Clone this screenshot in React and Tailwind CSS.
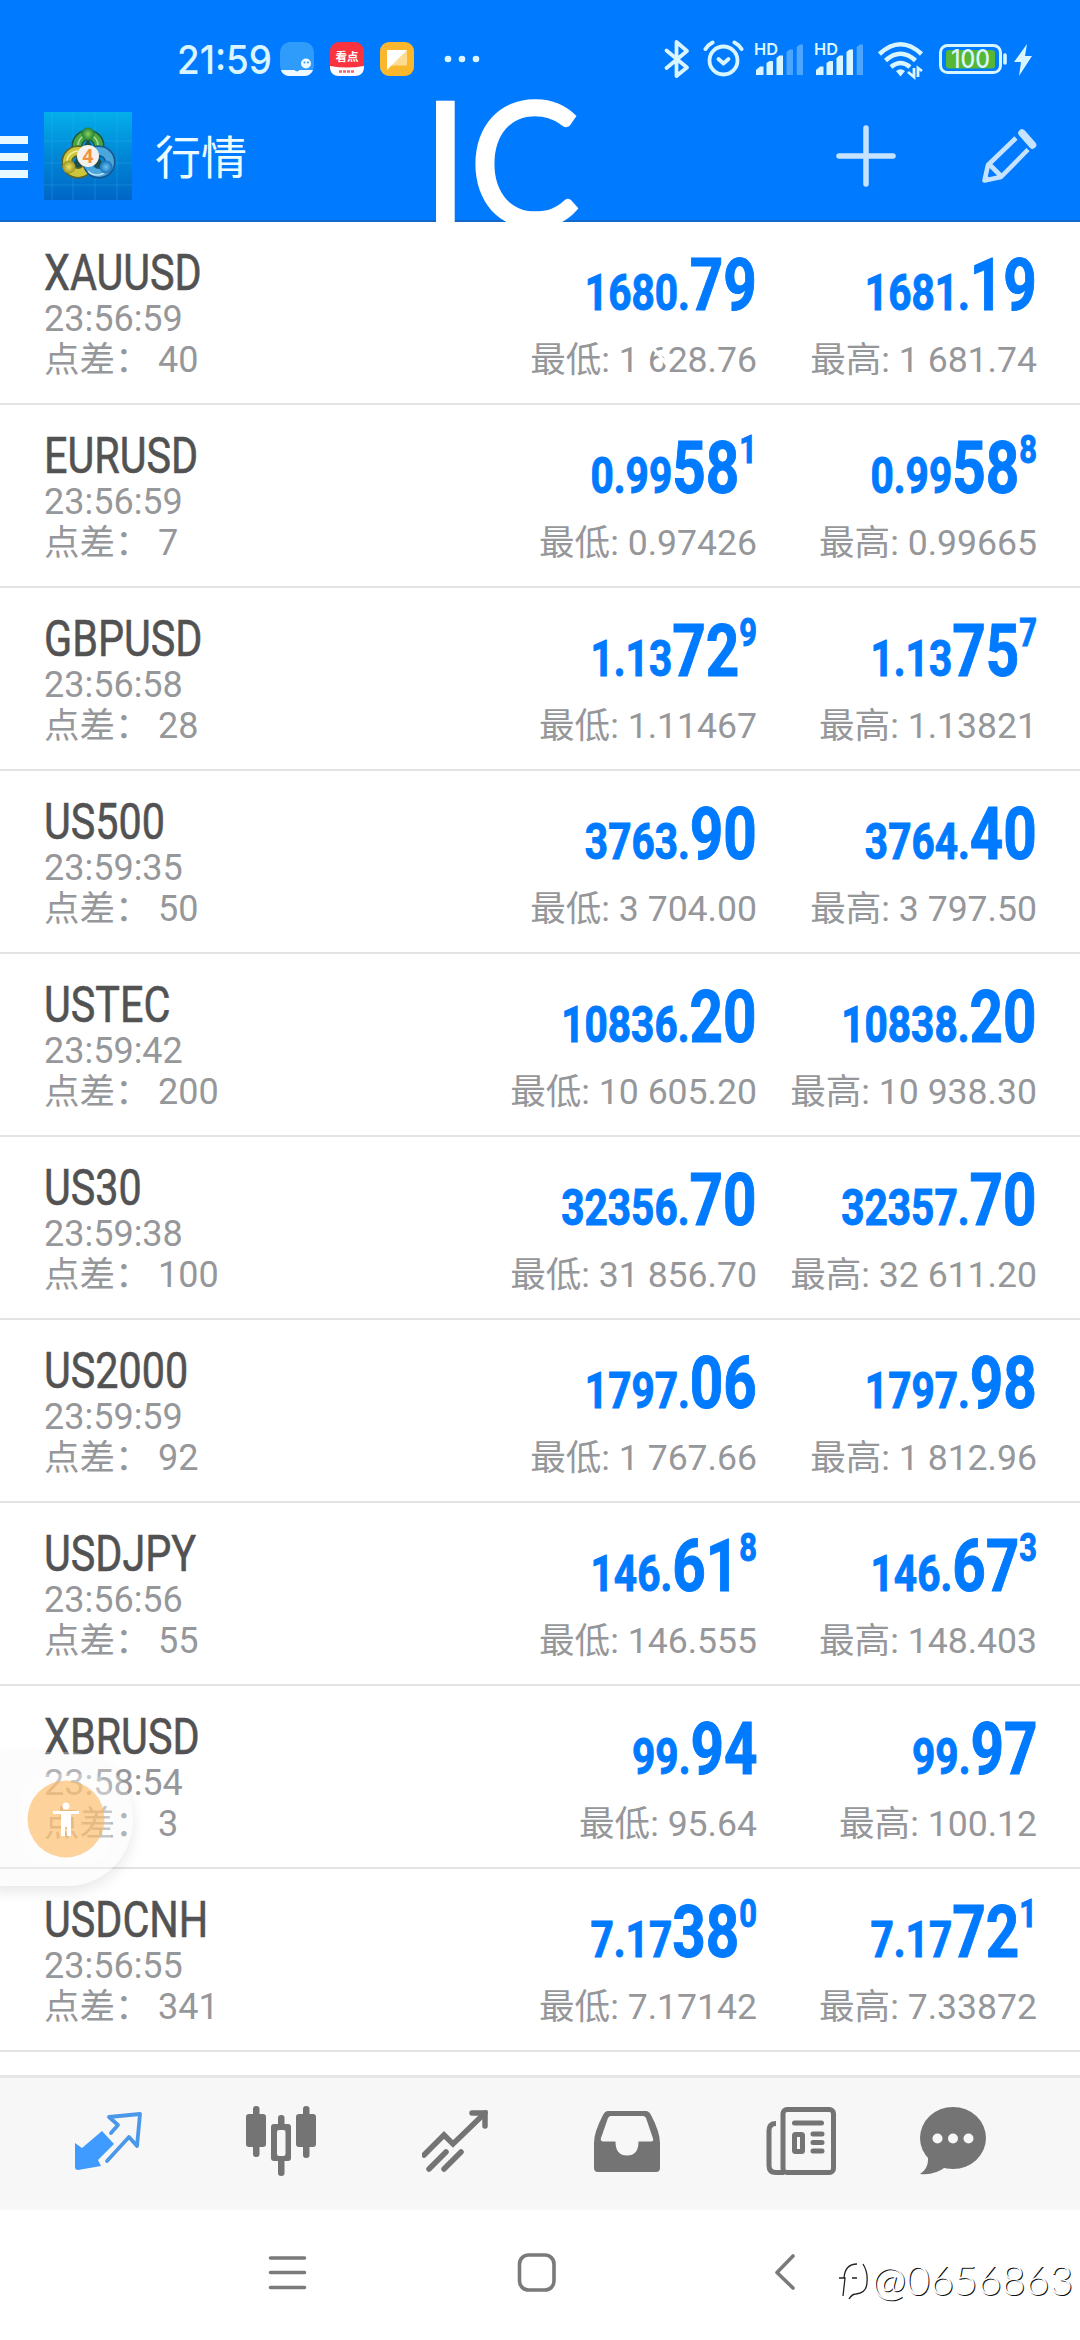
import clsx from 'clsx';

const quotes = [
  { symbol: 'XAUUSD', time: '23:56:59', spread: '40', bid: ['1680.', '79', ''], ask: ['1681.', '19', ''], low: '1 628.76', high: '1 681.74' },
  { symbol: 'EURUSD', time: '23:56:59', spread: '7', bid: ['0.99', '58', '1'], ask: ['0.99', '58', '8'], low: '0.97426', high: '0.99665' },
  { symbol: 'GBPUSD', time: '23:56:58', spread: '28', bid: ['1.13', '72', '9'], ask: ['1.13', '75', '7'], low: '1.11467', high: '1.13821' },
  { symbol: 'US500', time: '23:59:35', spread: '50', bid: ['3763.', '90', ''], ask: ['3764.', '40', ''], low: '3 704.00', high: '3 797.50' },
  { symbol: 'USTEC', time: '23:59:42', spread: '200', bid: ['10836.', '20', ''], ask: ['10838.', '20', ''], low: '10 605.20', high: '10 938.30' },
  { symbol: 'US30', time: '23:59:38', spread: '100', bid: ['32356.', '70', ''], ask: ['32357.', '70', ''], low: '31 856.70', high: '32 611.20' },
  { symbol: 'US2000', time: '23:59:59', spread: '92', bid: ['1797.', '06', ''], ask: ['1797.', '98', ''], low: '1 767.66', high: '1 812.96' },
  { symbol: 'USDJPY', time: '23:56:56', spread: '55', bid: ['146.', '61', '8'], ask: ['146.', '67', '3'], low: '146.555', high: '148.403' },
  { symbol: 'XBRUSD', time: '23:58:54', spread: '3', bid: ['99.', '94', ''], ask: ['99.', '97', ''], low: '95.64', high: '100.12' },
  { symbol: 'USDCNH', time: '23:56:55', spread: '341', bid: ['7.17', '38', '0'], ask: ['7.17', '72', '1'], low: '7.17142', high: '7.33872' },
];

function Signal({ bars }) {
  return (
    <svg viewBox="0 0 51 34" className="h-[34px] w-[51px] overflow-visible" fill="#d9f5ff">
      <text x="0" y="12.500" fontSize="16.500" fontFamily="Inter" fontWeight="600" textLength="24" lengthAdjust="spacingAndGlyphs">HD</text>
      <path d="M2 33v-5l4-3.500h3.500V33z" />
      <path d="M12.500 33V21l3-2H19v14z" />
      <path d="M22.500 33V16l3-2.500H29V33z" />
      <path d="M32.500 33V10l3-2.500H39V33z" opacity={bars > 3 ? 1 : 0.35} />
      <path d="M42.700 33V5l3-2.500H49V33z" opacity="0.35" />
    </svg>
  );
}

function StatusBar() {
  return (
    <div className="flex h-[112px] items-start pt-[40px] pl-[177px] text-[#d9f5ff]">
      <span className="w-[103px] origin-left scale-x-[0.92] font-['Inter'] text-[40px] leading-[40px] font-medium whitespace-nowrap">21:59</span>
      <svg viewBox="0 0 200 42" className="h-[42px] w-[200px]">
        <rect x="0" y="2" width="34" height="34" rx="10" fill="#2f9bfb" />
        <path d="M1 30h13l3 1.500 3-1.500h13c-2 5-6 6-9 6H10c-4 0-8-2-9-6z" fill="#eefaff" />
        <circle cx="26" cy="23.500" r="5" fill="#eefaff" />
        <circle cx="24.500" cy="22.500" r="1" fill="#2f9bfb" />
        <circle cx="28" cy="22.500" r="1" fill="#2f9bfb" />
        <rect x="50" y="2" width="34" height="34" rx="9" fill="#f9343e" />
        <path d="M50 26q17 3 34 0v1c0 6-4 9-9 9H59c-5 0-9-3-9-9z" fill="#fff" />
        <text x="67" y="21" fontSize="11.500" fontWeight="700" textAnchor="middle" fontFamily="Noto Sans CJK SC" fill="#fff">看点</text>
        <path d="M59 31.500h16" stroke="#f9606a" strokeWidth="2.500" strokeDasharray="3 1" />
        <rect x="100" y="2" width="34" height="34" rx="9" fill="#fbb72c" />
        <rect x="107" y="10" width="20" height="15.500" rx="1" fill="#fddb91" />
        <path d="M107 10h20l-20 20z" fill="#fff" />
        <g fill="#d9f5ff">
          <circle cx="168" cy="19" r="3.300" />
          <circle cx="182" cy="19" r="3.300" />
          <circle cx="196" cy="19" r="3.300" />
        </g>
      </svg>
      <svg viewBox="0 0 82 42" className="ml-[183px] h-[42px] w-[82px]" fill="none" stroke="#d9f5ff" strokeWidth="3.800" strokeLinecap="round" strokeLinejoin="round">
        <path d="M3.500 10.500 24 27.500 13.500 36V2L24 11 3.500 28" />
        <circle cx="60.500" cy="20.500" r="14" />
        <path d="m55.500 19 5 4.500 5-4.500" />
        <path d="M42.500 9q3-4.500 7-6.500M78.500 9q-3-4.500-7-6.500" strokeWidth="4" />
      </svg>
      <div className="ml-[9px] flex gap-[9px] pt-[2px]">
        <Signal bars={3} />
        <Signal bars={4} />
      </div>
      <svg viewBox="0 0 160 42" className="ml-[13px] h-[42px] w-[160px]" fill="none" stroke="#d9f5ff" strokeWidth="4.500">
        <path d="M1.500 14q21-19.500 42 0M7.500 20.500q15-13.500 30 0M13 27q9.500-8 19 0" />
        <path d="M18 31q4.500-3.500 9 0l-4.500 5.500z" fill="#d9f5ff" stroke="none" />
        <path d="M36 28v9l-6-5M40 37v-9l4 3" strokeWidth="2.800" />
        <rect x="62.500" y="5.500" width="60" height="27" rx="7" strokeWidth="3" />
        <rect x="68" y="10" width="49" height="18.500" rx="3" fill="#55b735" stroke="none" />
        <text x="92.500" y="28" fontSize="25" textAnchor="middle" fill="#d9f5ff" stroke="none" fontFamily="Inter" fontWeight="500" textLength="39" lengthAdjust="spacingAndGlyphs">100</text>
        <path d="M127 15v8" strokeWidth="3.600" strokeLinecap="round" />
        <path d="m149 4-13 18h7l-2 14 13-20h-7z" fill="#d9f5ff" stroke="none" />
      </svg>
    </div>
  );
}

function AppLogo() {
  return (
    <svg viewBox="0 0 88 88" className="ml-[16px] h-[88px] w-[88px]">
      <defs>
        <linearGradient id="tile" x1="0" y1="0" x2="0" y2="1">
          <stop offset="0" stopColor="#04aeea" />
          <stop offset="0.5" stopColor="#0087d6" />
          <stop offset="1" stopColor="#0066c6" />
        </linearGradient>
        <radialGradient id="green"><stop offset="0" stopColor="#8bd15c" /><stop offset="1" stopColor="#1e7f37" /></radialGradient>
        <radialGradient id="yellow"><stop offset="0" stopColor="#eee36a" /><stop offset="1" stopColor="#9c9420" /></radialGradient>
        <radialGradient id="blue"><stop offset="0" stopColor="#6dc4f2" /><stop offset="1" stopColor="#1570b8" /></radialGradient>
      </defs>
      <rect width="88" height="88" fill="url(#tile)" />
      <path d="M8 0v88M29 0v88M51 0v88M73 0v88M0 29h88M0 51h88M0 73h88" stroke="#38b6ee" strokeOpacity="0.3" />
      <path d="M44 27 26 57h36z" fill="#1d4f4a" />
      <circle cx="44" cy="34" r="11" fill="none" stroke="#1f5a3a" strokeWidth="11" />
      <circle cx="44" cy="34" r="11" fill="none" stroke="#4aa743" strokeWidth="8" />
      <path d="M34 33a10 10 0 0 1 20 0" fill="none" stroke="#a6dc8e" strokeWidth="1.500" />
      <circle cx="34" cy="50" r="11" fill="none" stroke="#5f6428" strokeWidth="11" />
      <circle cx="34" cy="50" r="11" fill="none" stroke="#cdc53c" strokeWidth="8" />
      <path d="M23 49a11 11 0 0 1 11-10" fill="none" stroke="#f4efa0" strokeWidth="1.500" />
      <circle cx="55" cy="50" r="11" fill="none" stroke="#17558f" strokeWidth="11" />
      <circle cx="55" cy="50" r="11" fill="none" stroke="#4ba6dc" strokeWidth="8" />
      <path d="M44 59a12 12 0 0 0 18 0" fill="none" stroke="#b7e2f8" strokeWidth="1.500" />
      <circle cx="44" cy="22" r="6.500" fill="url(#green)" />
      <circle cx="25" cy="55" r="6.500" fill="url(#yellow)" />
      <circle cx="62" cy="55" r="6.500" fill="url(#blue)" />
      <circle cx="44" cy="44" r="11" fill="#f5f1ee" />
      <text x="44" y="51" fontSize="19" fontWeight="700" textAnchor="middle" fontFamily="Open Sans" fill="#f29240">4</text>
    </svg>
  );
}

function Header() {
  return (
    <header className="relative h-[222px] overflow-hidden bg-[#007aff] shadow-[inset_0_-2px_0_#1467cc]">
      <StatusBar />
      <div className="flex h-[88px] items-center">
        <div className="mt-[2px] flex w-[28px] flex-col gap-[9px]">
          <i className="h-[8px] bg-[#e8faff]" />
          <i className="h-[8px] bg-[#e8faff]" />
          <i className="h-[8px] bg-[#e8faff]" />
        </div>
        <AppLogo />
        <h1 className="-mt-[4px] ml-[23px] font-['Noto_Sans_CJK_SC',sans-serif] text-[46px] leading-[60px] text-[#edfcff]">行情</h1>
        <svg viewBox="0 0 60 62" className="ml-auto h-[62px] w-[60px]" stroke="#c5e2ff" strokeWidth="5.500" strokeLinecap="round">
          <path d="M30 3v56M3 31h54" />
        </svg>
        <svg viewBox="0 0 56 58" className="mr-[43px] ml-[85px] h-[58px] w-[56px]" fill="none" stroke="#c5e2ff" strokeWidth="4.600">
          <path d="M35 11 7 38 3.500 53.500 20 50 47 22.500M8 37l12 12" strokeLinejoin="round" />
          <path d="m41 6 10.500 12" strokeWidth="7.500" strokeLinecap="round" />
          <path d="m4 47 7 6-8 1z" fill="#c5e2ff" stroke="none" />
        </svg>
      </div>
      <div className="absolute top-[57px] left-[422px] flex origin-left scale-x-[0.97] font-['Lato'] text-[172px] leading-[206px] text-white [-webkit-text-stroke:2.5px_white]">
        <span>I</span>
        <span>C</span>
      </div>
    </header>
  );
}

function Price({ parts, label, value, wide }) {
  const [base, big, sup] = parts;
  return (
    <div className={clsx('flex flex-col items-end whitespace-nowrap', wide ? 'w-[712px]' : 'w-[280px]')}>
      <p className="mt-[5px] flex h-[105px] origin-right translate-x-[1px] scale-x-[0.812] items-baseline font-bold text-[#007aff] [-webkit-text-stroke:1px_#007aff]">
        <span className="text-[50px] leading-[105px]">{base}</span>
        <span className="text-[72px] leading-[117px]">{big}</span>
        {sup && <span className="relative -top-[30px] text-[38px] leading-[40px]">{sup}</span>}
      </p>
      <p className="mt-[7px] translate-x-[1px] text-[35.6px] leading-[42px] text-[#96979a]">{label}: {value}</p>
    </div>
  );
}

function QuoteRow({ quote }) {
  return (
    <li className="flex h-[183px] border-b-2 border-[#e3e3e4] pr-[44px] pl-[44px]">
      <div className="w-0 whitespace-nowrap">
        <p className="mt-[22px] w-fit origin-left scale-x-[0.818] text-[50.500px] leading-[58px] text-[#525253] [-webkit-text-stroke:0.6px_#525253]">{quote.symbol}</p>
        <p className="-mt-[4px] text-[36px] leading-[42px] text-[#96979a]">{quote.time}</p>
        <p className="mt-0 flex text-[36px] leading-[41px] text-[#96979a]">
          <span className="w-[114px] shrink-0 text-[35.500px]">点差：</span>
          {quote.spread}
        </p>
      </div>
      <Price parts={quote.bid} label="最低" value={quote.low} wide />
      <Price parts={quote.ask} label="最高" value={quote.high} />
    </li>
  );
}

function FloatingButton() {
  return (
    <div className="absolute top-[1752px] -left-[8px] flex h-[134px] w-[141px] items-center rounded-r-[66px] bg-[#f5f5f5]/30 pl-[29px] shadow-[0_6px_14px_rgba(0,0,0,0.09)]">
      <div className="flex size-[90px] items-center justify-center rounded-[24px] bg-white/25">
        <svg viewBox="0 0 78 78" className="size-[78px]">
          <circle cx="39" cy="39" r="38.500" fill="#ffb24f" fillOpacity="0.560" />
          <circle cx="39" cy="26" r="3.500" fill="#fff" />
          <path d="M26 31h26v3h-8v22h-4v-9h-2v9h-4V34h-8z" fill="#fff" />
        </svg>
      </div>
    </div>
  );
}

function TabBar() {
  return (
    <nav className="mt-[23px] flex h-[135px] items-start border-t-[3px] border-[#e5e7e6] bg-[#f7f7f7] pt-[29px] pl-[74px] text-[#747474]">
      <svg viewBox="0 0 70 70" className="mt-[2px] h-[70px] w-[70px]" fill="none">
        <path d="M28 22 40 35 24 51l3 6-23 4c-2 0-3-1-3-3V34l7 5z" fill="#3f9bff" />
        <path d="m37 24 7-8-9-8 31-3-3 32-8-9-22 24" stroke="#4c98e8" strokeWidth="3.800" strokeLinejoin="round" strokeLinecap="round" />
      </svg>
      <svg viewBox="0 0 70 70" className="ml-[102px] h-[70px] w-[70px] overflow-visible" fill="currentColor">
        <rect x="0" y="7" width="20" height="33" rx="3" />
        <rect x="7" y="-1" width="6.500" height="51" rx="3" />
        <rect x="50" y="7" width="20" height="33" rx="3" />
        <rect x="57" y="-1" width="6.500" height="52" rx="3" />
        <rect x="32" y="8" width="6.500" height="61" rx="3" />
        <rect x="25" y="17" width="20" height="37" rx="3" />
        <rect x="31" y="23" width="8.500" height="26" rx="2" fill="#f7f7f7" />
      </svg>
      <svg viewBox="0 0 70 70" className="mt-[1px] ml-[106px] h-[70px] w-[70px]" fill="none" stroke="currentColor" strokeWidth="5.500" strokeLinecap="round">
        <path d="m2 47 20-20 9 9L63 5" />
        <path d="M50 5h13v13" />
        <path d="m7 61 17-17M22 61l17-17" />
      </svg>
      <svg viewBox="0 0 66 64" className="mt-[1px] ml-[102px] h-[64px] w-[66px]" fill="currentColor">
        <path fillRule="evenodd" d="M14 3h38q3 0 5 4 9 17 9 28v25q0 4-4 4H4q-4 0-4-4V35Q0 24 9 7q2-4 5-4zM17 8q-2 0-3 2L7 30q-1 3 2 3.500h12.500q0 14 11.500 14t11.500-14H57q3 0 2-3L52 10q-1-2-3-2z" />
      </svg>
      <svg viewBox="0 0 70 68" className="ml-[106px] h-[68px] w-[70px]" fill="none" stroke="currentColor">
        <rect x="17" y="2.500" width="50.500" height="63" rx="4" strokeWidth="5" />
        <path d="M10 16.500q-7 0-7 7v35q0 7 7 7h8" strokeWidth="5" />
        <path d="M28.500 16h27M47 27h9M47 35.500h9M47 44h9" strokeWidth="5" strokeLinecap="round" />
        <rect x="28.500" y="27.500" width="8" height="17" rx="1" strokeWidth="5" />
      </svg>
      <svg viewBox="0 0 66 68" className="ml-[84px] h-[68px] w-[66px]" fill="currentColor">
        <ellipse cx="33" cy="31" rx="33" ry="31" />
        <path d="M8 50q1 11-8 17 14 2 27-8z" />
        <g fill="#f7f7f7">
          <circle cx="17.500" cy="31.500" r="5" />
          <circle cx="33" cy="31.500" r="5" />
          <circle cx="48.500" cy="31.500" r="5" />
        </g>
      </svg>
    </nav>
  );
}

function SystemNav() {
  return (
    <div className="flex h-[130px] items-start bg-white pt-[43px] pl-[268px]">
      <svg viewBox="0 0 39 38" className="h-[38px] w-[39px]" stroke="#7a7a7a" strokeWidth="3.600" strokeLinecap="round">
        <path d="M2.500 5h34M2.500 19.500h34M2.500 34.500h34" />
      </svg>
      <svg viewBox="0 0 39 39" className="ml-[210px] h-[39px] w-[39px]" fill="none" stroke="#7a7a7a" strokeWidth="3.600">
        <rect x="2.500" y="2" width="34.500" height="35" rx="9" />
      </svg>
      <svg viewBox="0 0 22 38" className="ml-[218px] h-[38px] w-[22px]" fill="none" stroke="#7a7a7a" strokeWidth="3.600" strokeLinecap="round" strokeLinejoin="round">
        <path d="M19 3 3 19.500 19 35" />
      </svg>
      <div className="mt-[4px] ml-[38px] flex items-center text-white">
        <svg viewBox="0 0 38 44" className="h-[44px] w-[38px]" fill="none" stroke="#222" strokeWidth="1.300">
          <path d="M9 39 11 21h-6M10 21q1-14 13-14M18 21h5M29 7q5 8 4 18 0 11-11 12-4 0-7 5" />
        </svg>
        <span className="origin-left scale-x-[0.98] font-['Lato'] text-[42px] leading-[44px] font-light [text-shadow:1px_1px_0_#111]">@0656863</span>
      </div>
    </div>
  );
}

function App() {
  return (
    <main className="relative h-[2340px] w-[1080px] overflow-hidden bg-white font-['Roboto','Noto_Sans_CJK_SC',sans-serif]">
      <Header />
      <ul>
        {quotes.map((quote) => (
          <QuoteRow key={quote.symbol} quote={quote} />
        ))}
      </ul>
      <TabBar />
      <SystemNav />
      <FloatingButton />
      {/* tail of the white overlay lettering, crossing the first low price */}
      <svg viewBox="0 0 40 30" className="absolute top-[344px] left-[652px] h-[30px] w-[40px]" fill="none" stroke="#fff" strokeWidth="3.500">
        <path d="m2 5 15 18M9 8l8-1M25 9 15 24M12 5l4 16M16 12l14-2" />
      </svg>
    </main>
  );
}

export default App;
